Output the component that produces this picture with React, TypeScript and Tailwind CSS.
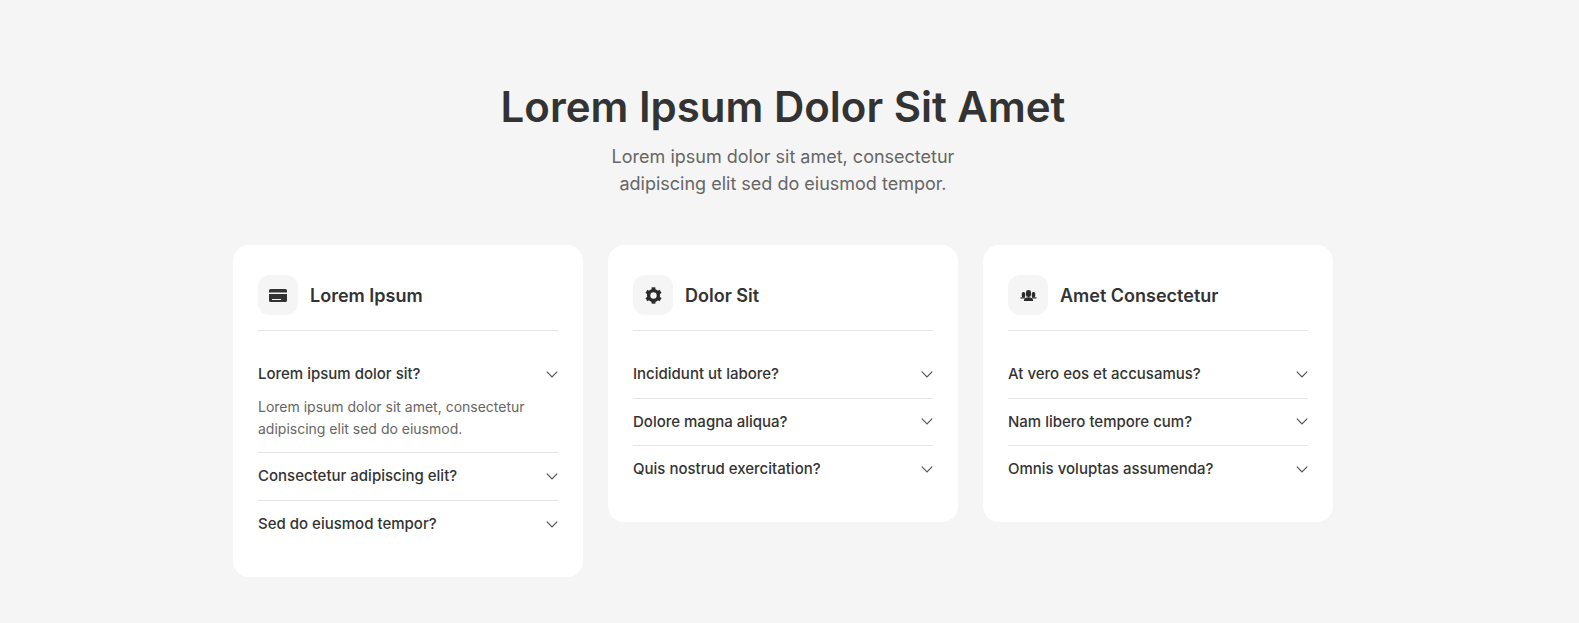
import type { ReactNode } from "react";

interface Faq {
  q: string;
  a?: string;
}

interface Category {
  title: string;
  icon: ReactNode;
  items: Faq[];
}

const CardIcon = () => (
  <svg width="18" height="13" viewBox="0 0 18 13" fill="#333333">
    <path d="M1.5 0h15A1.5 1.5 0 0 1 18 1.500V3.500H0V1.500A1.500 1.500 0 0 1 1.500 0Z" />
    <path d="M0 5h18v6.500a1.500 1.500 0 0 1-1.500 1.500h-15A1.500 1.500 0 0 1 0 11.500Z" />
    <rect x="3" y="10" width="9" height="1" fill="#f5f5f5" />
  </svg>
);

const GearIcon = () => (
  <svg width="17" height="17" viewBox="0 0 16 16" fill="none" stroke="#2b2b2b">
    <circle cx="8" cy="8" r="4.600" strokeWidth="3.200" />
    {[0, 60, 120, 180, 240, 300].map((a) => (
      <line key={a} x1="8" y1="0.300" x2="8" y2="3" strokeWidth="3.600" transform={`rotate(${a} 8 8)`} />
    ))}
  </svg>
);

const TeamIcon = () => (
  <svg width="17" height="11" viewBox="0 0 17 11" fill="#2b2b2b">
    <rect x="1.800" y="2" width="3.400" height="5.500" rx="1.500" />
    <rect x="11.800" y="2" width="3.400" height="5.500" rx="1.500" />
    <rect x="0.500" y="7.300" width="4.500" height="1.200" />
    <rect x="12" y="7.300" width="4.500" height="1.200" />
    <rect x="6" y="0" width="5" height="7" rx="2.300" />
    <path d="M3.800 11c0-2.300 1.700-3.800 4.700-3.800s4.700 1.500 4.700 3.800Z" />
  </svg>
);

const Chevron = () => (
  <svg width="12" height="7" viewBox="0 0 12 7" fill="none" stroke="#555555" strokeWidth="1.200" className="shrink-0">
    <path d="M0.800 0.700 6 5.900l5.200-5.200" />
  </svg>
);

const categories: Category[] = [
  {
    title: "Lorem Ipsum",
    icon: <CardIcon />,
    items: [
      { q: "Lorem ipsum dolor sit?", a: "Lorem ipsum dolor sit amet, consectetur adipiscing elit sed do eiusmod." },
      { q: "Consectetur adipiscing elit?" },
      { q: "Sed do eiusmod tempor?" },
    ],
  },
  {
    title: "Dolor Sit",
    icon: <GearIcon />,
    items: [
      { q: "Incididunt ut labore?" },
      { q: "Dolore magna aliqua?" },
      { q: "Quis nostrud exercitation?" },
    ],
  },
  {
    title: "Amet Consectetur",
    icon: <TeamIcon />,
    items: [
      { q: "At vero eos et accusamus?" },
      { q: "Nam libero tempore cum?" },
      { q: "Omnis voluptas assumenda?" },
    ],
  },
];

export default function App() {
  return (
    <div className="min-h-[623px] bg-[#f5f5f5] font-['Inter',sans-serif] overflow-hidden">
      <div className="w-[1566px] pt-[81px] pb-[46px]">
        <div className="text-center">
          <h1 className="text-[42px] leading-[52px] font-semibold text-[#333333]">Lorem Ipsum Dolor Sit Amet</h1>
          <p className="mt-[10px] text-[18px] leading-[27px] text-[#666666]">
            Lorem ipsum dolor sit amet, consectetur
            <br />
            adipiscing elit sed do eiusmod tempor.
          </p>
        </div>

        <div className="mx-auto mt-[48px] w-[1100px] grid grid-cols-3 gap-[25px] items-start">
          {categories.map((cat) => (
            <div key={cat.title} className="bg-white rounded-2xl px-[25px] pt-[30px] pb-[29.5px]">
              <div className="flex items-center gap-3 pb-[15px] border-b border-[#e5e5e5]">
                <div className="w-10 h-10 rounded-xl bg-[#f5f5f5] flex items-center justify-center">
                  {cat.icon}
                </div>
                <h2 className="text-[18px] font-semibold text-[#333333]">{cat.title}</h2>
              </div>

              <div className="mt-[20px]">
                {cat.items.map((item, i) => (
                  <div key={item.q} className={i < cat.items.length - 1 ? "border-b border-[#e5e5e5]" : ""}>
                    <div className="flex items-center justify-between py-[12px]">
                      <span className="text-[15px] leading-[22.5px] font-medium text-[#333333]">{item.q}</span>
                      <Chevron />
                    </div>
                    {item.a && (
                      <p className="-mt-[2px] pb-[12px] text-[14px] leading-[22.4px] text-[#666666]">{item.a}</p>
                    )}
                  </div>
                ))}
              </div>
            </div>
          ))}
        </div>
      </div>
    </div>
  );
}
